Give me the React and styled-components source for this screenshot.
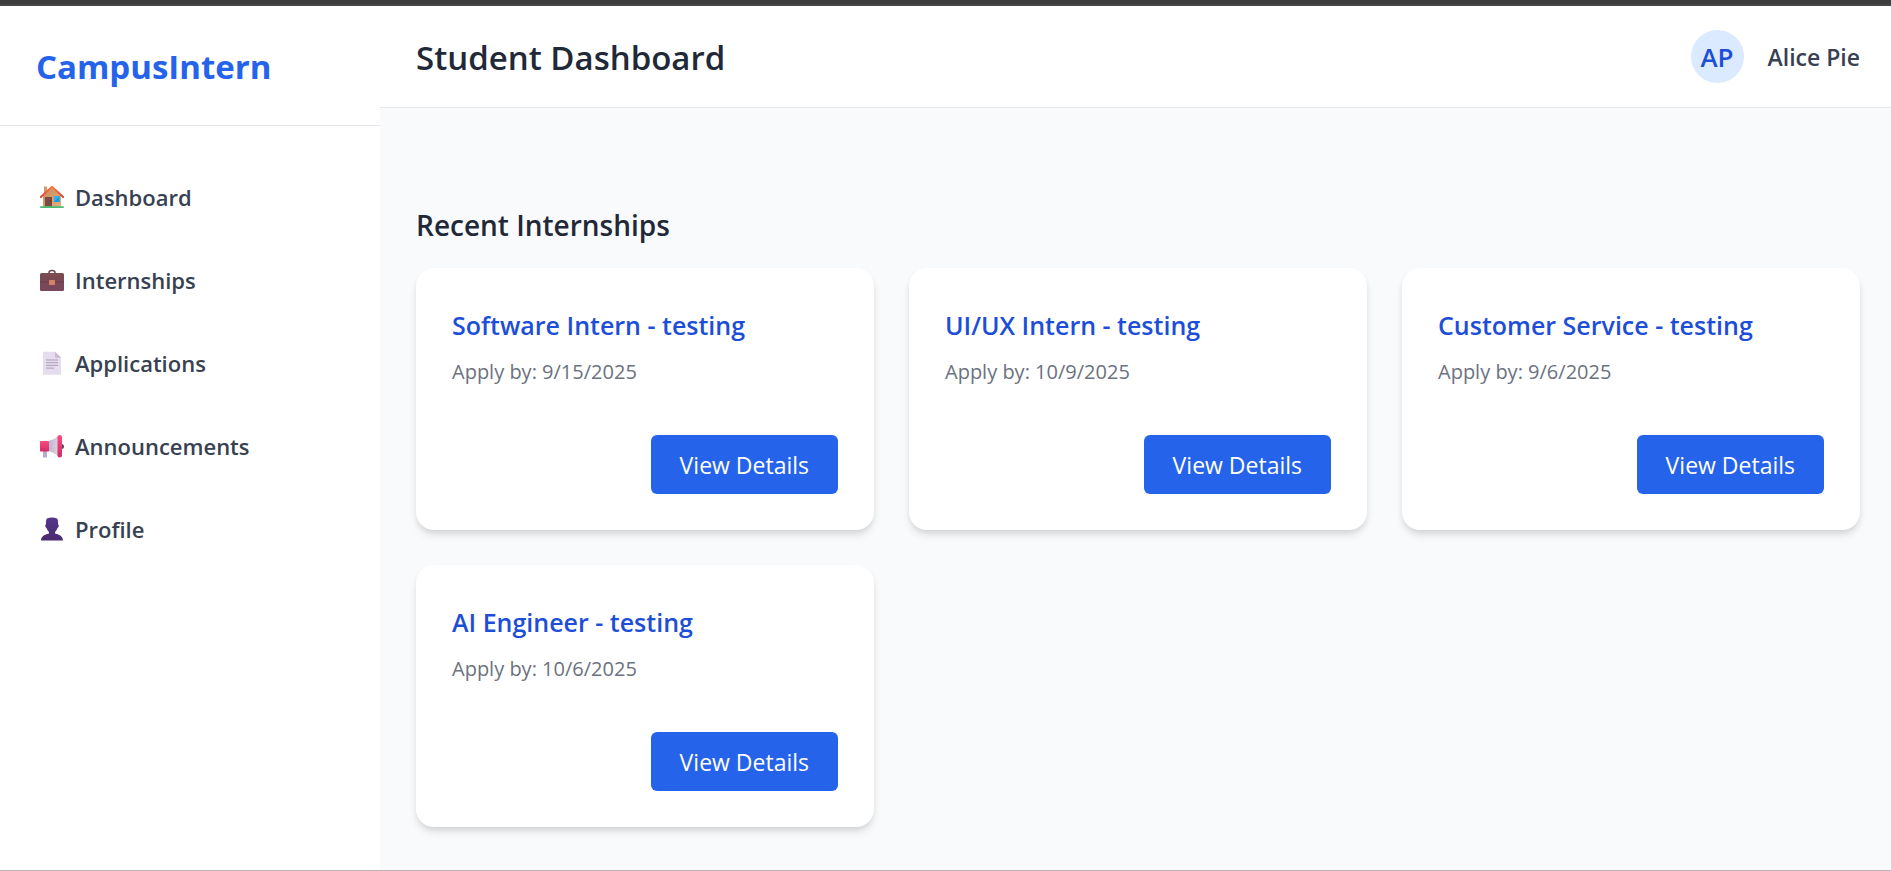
import React from "react";
import styled, { createGlobalStyle } from "styled-components";

const GlobalStyle = createGlobalStyle`
  * { box-sizing: border-box; }
  body {
    margin: 0;
    background: #f9fafb;
    color: #1f2937;
    font-family: "Segoe UI", "Open Sans", "Noto Sans", sans-serif;
    font-size: 24px;
    line-height: 36px;
  }
  h1, h2, h3, p, ul { margin: 0; padding: 0; }
`;

const Page = styled.div`
  display: flex;
  flex-direction: column;
  min-height: 100vh;
  border-bottom: 1px solid #bdb4b8;
`;

const TopStrip = styled.div`
  height: 6px;
  background: #3c3c3c;
  border-bottom: 2px solid #474546;
`;

const Shell = styled.div`
  display: flex;
  flex: 1;
`;

const Sidebar = styled.aside`
  flex: 0 0 380px;
  background: #ffffff;
`;

const Brand = styled.div`
  display: flex;
  align-items: center;
  height: 120px;
  padding: 2px 36px 0;
  border-bottom: 1px solid #e5e7eb;
  color: #2563eb;
  font-size: 33px;
  font-weight: 700;
`;

const NavList = styled.ul`
  display: flex;
  flex-direction: column;
  gap: 24px;
  padding: 41px 36px;
  list-style: none;
`;

const NavLink = styled.a`
  display: flex;
  align-items: center;
  gap: 11px;
  height: 59px;
  padding: 0 4px;
  color: #374151;
  font-size: 22px;
  font-weight: 600;
  text-decoration: none;
`;

const Content = styled.div`
  flex: 1;
  min-width: 0;
`;

const Header = styled.header`
  display: flex;
  align-items: center;
  justify-content: space-between;
  padding: 24px 31px 24px 36px;
  background: #ffffff;
  border-bottom: 1px solid #e5e7eb;
`;

const PageTitle = styled.h1`
  padding-top: 2px;
  font-size: 33px;
  font-weight: 600;
`;

const User = styled.div`
  display: flex;
  align-items: center;
  gap: 24px;
  color: #374151;
  font-size: 23px;
  font-weight: 600;
`;

const Avatar = styled.span`
  display: grid;
  place-items: center;
  width: 53px;
  height: 53px;
  border-radius: 50%;
  background: #dbeafe;
  color: #1d4ed8;
  font-size: 26px;
`;

const Main = styled.main`
  padding: 96px 31px 36px 36px;
`;

const SectionTitle = styled.h2`
  margin-bottom: 22px;
  font-size: 28px;
  line-height: 42px;
  font-weight: 600;
`;

const CardGrid = styled.div`
  display: grid;
  grid-template-columns: repeat(3, 1fr);
  gap: 35px;
`;

const Card = styled.article`
  display: flex;
  flex-direction: column;
  padding: 36px;
  border-radius: 18px;
  background: #ffffff;
  box-shadow: 0 6px 9px -1px rgba(0, 0, 0, 0.1), 0 3px 6px -2px rgba(0, 0, 0, 0.1);
`;

const CardTitle = styled.h3`
  margin-bottom: 11px;
  color: #1d4ed8;
  font-size: 25px;
  line-height: 42px;
  font-weight: 600;
`;

const Deadline = styled.p`
  margin-bottom: 48px;
  color: #6b7280;
  font-size: 20px;
  line-height: 30px;
`;

const DetailsButton = styled.button`
  align-self: flex-end;
  height: 59px;
  padding: 0 29px;
  border: 0;
  border-radius: 6px;
  background: #2563eb;
  color: #ffffff;
  font: inherit;
  font-size: 23px;
  cursor: pointer;
`;

const Icon = styled.svg`
  display: block;
  flex: none;
  width: 24px;
  height: 24px;
`;

const HomeIcon = () => (
  <Icon viewBox="0 0 24 24" aria-hidden="true">
    <defs>
      <linearGradient id="wall" x1="0" y1="0" x2="1" y2="1">
        <stop offset="0" stopColor="#c98a5c" />
        <stop offset="1" stopColor="#e3b07c" />
      </linearGradient>
      <linearGradient id="roof" x1="0" y1="0" x2="0" y2="1">
        <stop offset="0" stopColor="#ff7a4a" />
        <stop offset="1" stopColor="#d8402f" />
      </linearGradient>
    </defs>
    <path d="M4 1.500h3v8H4z" fill="#d59a6b" />
    <path d="M12 2.500 21 11v11H3V11z" fill="url(#wall)" />
    <path d="M5 12h7v9.500H5z" fill="#7b4a42" />
    <circle cx="10.500" cy="16" r=".6" fill="#4d2c2b" />
    <path d="M14 11h5.500v6H14z" fill="#2bb3f3" />
    <path d="M14 17 19.500 11v6z" fill="#179be0" />
    <path d="M.8 12 12 1.800 23.200 12" fill="none" stroke="url(#roof)" strokeWidth="1.900" strokeLinecap="round" strokeLinejoin="round" />
    <rect x="0" y="21.200" width="24" height="1.800" rx=".9" fill="#45bd72" />
  </Icon>
);

const BriefcaseIcon = () => (
  <Icon viewBox="0 0 24 24" aria-hidden="true">
    <defs>
      <linearGradient id="case" x1="0" y1="0" x2="0" y2="1">
        <stop offset="0" stopColor="#7b4c50" />
        <stop offset="1" stopColor="#79465c" />
      </linearGradient>
    </defs>
    <path d="M9 5.500V4.500q0-2 3-2t3 2v1" fill="none" stroke="#6a4348" strokeWidth="1.500" />
    <rect x="0" y="5" width="24" height="18" rx="1.500" fill="url(#case)" />
    <path d="M0 13.500h24v1H0z" fill="#683d49" />
    <rect x="9" y="12" width="6" height="5" rx=".8" fill="#d38468" />
  </Icon>
);

const DocumentIcon = () => (
  <Icon viewBox="0 0 24 24" aria-hidden="true">
    <path d="M3 .8h12l6 6v17H3z" fill="#e6dcf0" />
    <path d="M15 .8l6 6h-6z" fill="#c6bbd2" />
    <path d="M6 9h12M6 11.700h12M6 14.400h12M6 17.100h8" fill="none" stroke="#aaa0b5" strokeWidth="1" />
  </Icon>
);

const MegaphoneIcon = () => (
  <Icon viewBox="0 0 24 24" aria-hidden="true">
    <defs>
      <linearGradient id="cone" x1="0" y1="0" x2="1" y2="0">
        <stop offset="0" stopColor="#bfb2cd" />
        <stop offset="1" stopColor="#dcd2e2" />
      </linearGradient>
      <linearGradient id="horn" x1="0" y1="0" x2="0" y2="1">
        <stop offset="0" stopColor="#ff4a7c" />
        <stop offset="1" stopColor="#cf2e68" />
      </linearGradient>
    </defs>
    <circle cx="21.500" cy="12.500" r="2.500" fill="#5d4a60" />
    <path d="M3 17h4v6.500H3z" fill="#b9a8cf" />
    <path d="M8.500 7C13 6 15.500 4 18 2v20c-2.500-2-5-4-9.500-5z" fill="url(#cone)" />
    <rect x="0" y="7" width="9" height="10.500" rx=".8" fill="url(#horn)" />
    <rect x="17.500" y="1" width="4.500" height="22.500" rx="2.200" fill="url(#horn)" />
  </Icon>
);

const PersonIcon = () => (
  <Icon viewBox="0 0 24 24" aria-hidden="true">
    <defs>
      <linearGradient id="bust" x1="0" y1="0" x2="0" y2="1">
        <stop offset="0" stopColor="#54358a" />
        <stop offset="1" stopColor="#4b2b70" />
      </linearGradient>
    </defs>
    <path d="M7 1.500Q9 .5 12 .5t5 1q1.200 1 1 6 1 0 .8 1.500T17.500 11q-.7 2.500-2.500 4v1.500c5 1 8 3.500 8 7H1c0-3.500 3-6 8-7V15q-1.800-1.500-2.500-4-1.100-.5-1.300-2T6 7.500q-.2-5 1-6z" fill="url(#bust)" />
  </Icon>
);

const navItems = [
  { label: "Dashboard", Glyph: HomeIcon },
  { label: "Internships", Glyph: BriefcaseIcon },
  { label: "Applications", Glyph: DocumentIcon },
  { label: "Announcements", Glyph: MegaphoneIcon },
  { label: "Profile", Glyph: PersonIcon },
];

const internships = [
  { title: "Software Intern - testing", deadline: "9/15/2025" },
  { title: "UI/UX Intern - testing", deadline: "10/9/2025" },
  { title: "Customer Service - testing", deadline: "9/6/2025" },
  { title: "AI Engineer - testing", deadline: "10/6/2025" },
];

export default function App() {
  return (
    <Page>
      <GlobalStyle />
      <TopStrip />
      <Shell>
        <Sidebar>
          <Brand>CampusIntern</Brand>
          <nav>
            <NavList>
              {navItems.map(({ label, Glyph }) => (
                <li key={label}>
                  <NavLink href="#">
                    <Glyph />
                    {label}
                  </NavLink>
                </li>
              ))}
            </NavList>
          </nav>
        </Sidebar>
        <Content>
          <Header>
            <PageTitle>Student Dashboard</PageTitle>
            <User>
              <Avatar>AP</Avatar>
              <span>Alice Pie</span>
            </User>
          </Header>
          <Main>
            <SectionTitle>Recent Internships</SectionTitle>
            <CardGrid>
              {internships.map(({ title, deadline }) => (
                <Card key={title}>
                  <CardTitle>{title}</CardTitle>
                  <Deadline>Apply by: {deadline}</Deadline>
                  <DetailsButton type="button">View Details</DetailsButton>
                </Card>
              ))}
            </CardGrid>
          </Main>
        </Content>
      </Shell>
    </Page>
  );
}
